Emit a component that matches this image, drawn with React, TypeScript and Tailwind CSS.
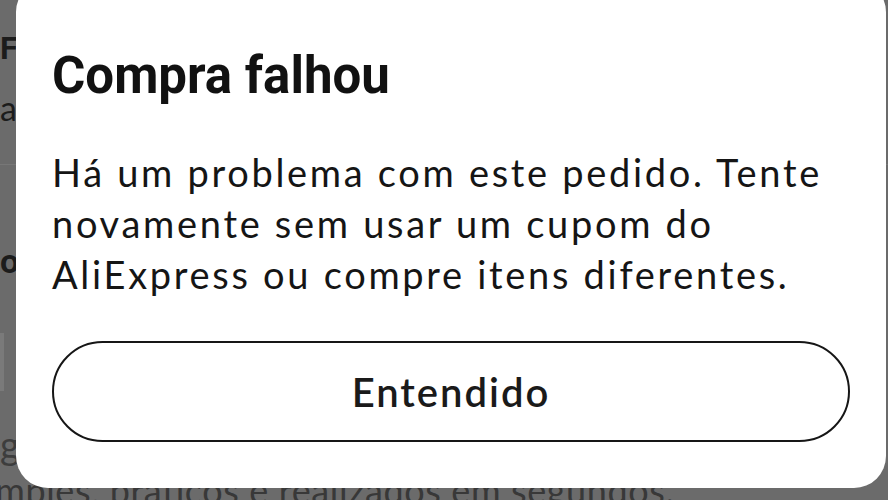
export default function App() {
  return (
    <div className="relative h-[500px] w-[888px] overflow-hidden bg-[#6b6b6b] font-['Lato',sans-serif]">
      {/* page behind the overlay */}
      <div className="flex flex-col text-[#1c1c1c]">
        <div className="mt-[30px] h-[36px] font-['Roboto',sans-serif] text-[32px] font-bold leading-[36px]">F</div>
        <div className="mt-[22px] h-[40px] text-[34px] leading-[40px]">a</div>
        <div className="mt-[36px] h-px bg-[#777]" />
        <div className="mt-[78px] h-[36px] font-['Roboto',sans-serif] text-[34px] font-bold leading-[36px]">o</div>
        <div className="mt-[54px] h-[58px] w-[4px] bg-[#7a7a7a]" />
        <div className="mt-[36px] h-[34px] text-[38px] leading-[34px] text-[#3d3d3d]">g</div>
        <div className="-ml-[34px] mt-[10px] whitespace-nowrap text-[36px] leading-[38px] tracking-[0.6px] text-[#383838]">
          Simples, práticos e realizados em segundos.
        </div>
      </div>

      {/* dialog */}
      <div className="absolute left-[16px] top-[-20px] flex w-[870px] flex-col rounded-[32px] bg-white px-[36px] pt-[66px] pb-[46px]">
        <h2 className="font-['Roboto',sans-serif] text-[51px] font-bold leading-[60px] text-[#111]">
          Compra falhou
        </h2>
        <p className="mt-[41px] text-[38px] leading-[51px] tracking-[2.7px] text-[#151515]">
          Há um problema com este pedido. Tente novamente sem usar um cupom do AliExpress ou compre itens diferentes.
        </p>
        <button className="mt-[41px] flex h-[101px] w-full items-center justify-center rounded-full border-2 border-[#161616] text-[40px] font-semibold tracking-[2px] text-[#1a1a1a]">
          Entendido
        </button>
      </div>
    </div>
  );
}
